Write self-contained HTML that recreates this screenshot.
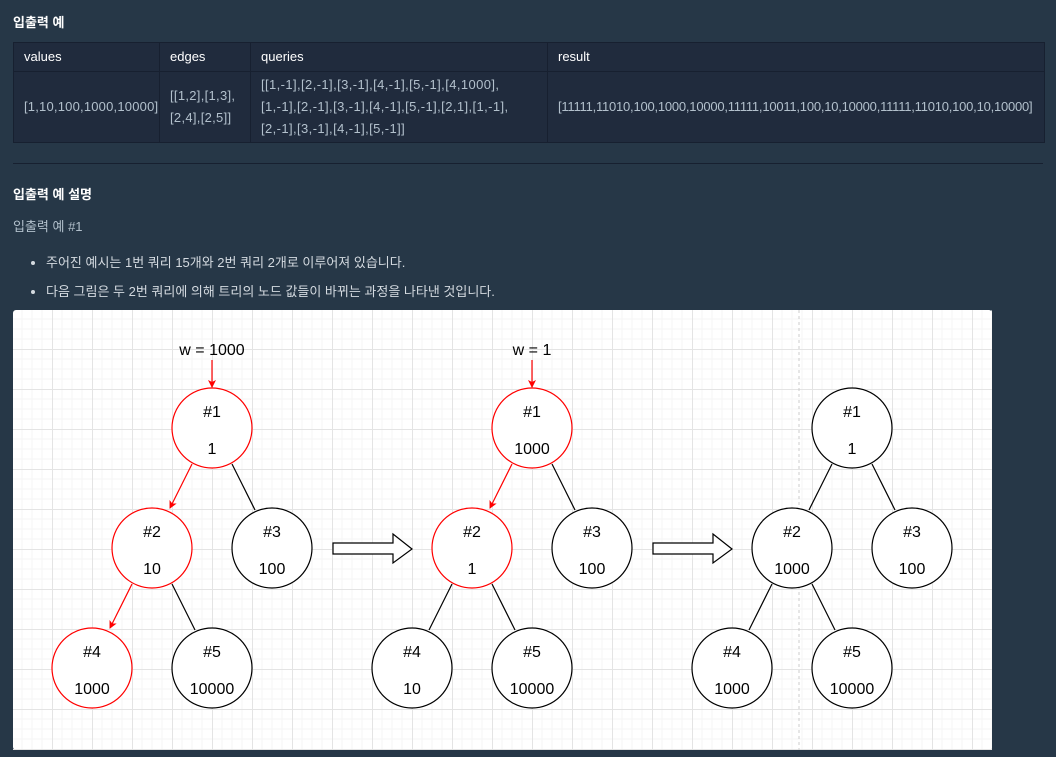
<!DOCTYPE html>
<html><head><meta charset="utf-8"><style>
body{margin:0;width:1056px;height:757px;background:#263747;font-family:"Liberation Sans","Noto Sans CJK KR",sans-serif;color:#d4dae0;overflow:hidden;position:relative}
.h{position:absolute;left:13px;font-size:13px;font-weight:bold;color:#fff}
table{position:absolute;left:13px;top:42px;border-collapse:collapse;table-layout:fixed;width:1031px;background:#202b3d;font-size:13px;color:#b2c0cc}
td,th{border:1px solid #172030;padding:0 10px;text-align:left;vertical-align:middle;line-height:22px;white-space:nowrap;overflow:visible}
th{font-weight:normal;color:#fff;height:28px}
td{height:70px}
.hr{position:absolute;left:13px;top:163px;width:1030px;height:1px;background:#172030}
.t{position:absolute;font-size:13px}
ul{position:absolute;left:13px;margin:0;padding-left:33px;font-size:13px;color:#d4dae0}
</style></head><body>
<div class="h" style="top:12px">입출력 예</div>
<table><colgroup><col style="width:146px"><col style="width:91px"><col style="width:297px"><col style="width:497px"></colgroup>
<tr><th>values</th><th>edges</th><th>queries</th><th>result</th></tr>
<tr><td style="letter-spacing:0.2px">[1,10,100,1000,10000]</td><td style="letter-spacing:0.3px">[[1,2],[1,3],<br>[2,4],[2,5]]</td><td style="letter-spacing:0.4px">[[1,-1],[2,-1],[3,-1],[4,-1],[5,-1],[4,1000],<br>[1,-1],[2,-1],[3,-1],[4,-1],[5,-1],[2,1],[1,-1],<br>[2,-1],[3,-1],[4,-1],[5,-1]]</td><td style="letter-spacing:-0.22px">[11111,11010,100,1000,10000,11111,10011,100,10,10000,11111,11010,100,10,10000]</td></tr></table>
<div class="hr"></div>
<div class="h" style="top:184px">입출력 예 설명</div>
<div class="t" style="left:13px;top:216px;color:#b2c0cc">입출력 예 #1</div>
<ul style="top:252px"><li style="margin-bottom:10px">주어진 예시는 1번 쿼리 15개와 2번 쿼리 2개로 이루어져 있습니다.</li><li>다음 그림은 두 2번 쿼리에 의해 트리의 노드 값들이 바뀌는 과정을 나타낸 것입니다.</li></ul>
<svg style="position:absolute;left:0;top:0" width="1056" height="757" font-family="Liberation Sans, Arial, sans-serif" font-size="16">
<defs>
<pattern id="g" width="40" height="40" patternUnits="userSpaceOnUse" x="12" y="29">
<path d="M10 0V40M20 0V40M30 0V40M0 10H40M0 20H40M0 30H40" stroke="#f6f6f6" stroke-width="1"/>
<path d="M0.5 0V40M0 0.5H40" stroke="#e4e4e4" stroke-width="1"/>
</pattern>
<marker id="a" markerWidth="8" markerHeight="8" refX="7" refY="4" orient="auto" markerUnits="userSpaceOnUse"><path d="M0 0L8 4L0 8L2 4Z" fill="#f00"/></marker>
</defs>
<rect x="13" y="310" width="979" height="440" rx="3" fill="#fff"/>
<rect x="13" y="310" width="979" height="440" fill="url(#g)"/>
<line x1="799" y1="310" x2="799" y2="750" stroke="#ccc" stroke-dasharray="3,3"/>
<g stroke-width="1.2" fill="none">
<line x1="232" y1="464" x2="255" y2="510" stroke="#000"/>
<line x1="172" y1="584" x2="195" y2="630" stroke="#000"/>
<line x1="192" y1="464" x2="170" y2="508" stroke="#f00" marker-end="url(#a)"/>
<line x1="132" y1="584" x2="110" y2="628" stroke="#f00" marker-end="url(#a)"/>
<line x1="212" y1="360" x2="212" y2="387" stroke="#f00" marker-end="url(#a)"/>
<line x1="552" y1="464" x2="575" y2="510" stroke="#000"/>
<line x1="452" y1="584" x2="429" y2="630" stroke="#000"/>
<line x1="492" y1="584" x2="515" y2="630" stroke="#000"/>
<line x1="512" y1="464" x2="490" y2="508" stroke="#f00" marker-end="url(#a)"/>
<line x1="532" y1="360" x2="532" y2="387" stroke="#f00" marker-end="url(#a)"/>
<line x1="832" y1="464" x2="809" y2="510" stroke="#000"/>
<line x1="872" y1="464" x2="895" y2="510" stroke="#000"/>
<line x1="772" y1="584" x2="749" y2="630" stroke="#000"/>
<line x1="812" y1="584" x2="835" y2="630" stroke="#000"/>
</g>
<g stroke-width="1.2" fill="#fff">
<circle cx="212" cy="428" r="40" stroke="#f00"/><circle cx="152" cy="548" r="40" stroke="#f00"/><circle cx="272" cy="548" r="40" stroke="#000"/><circle cx="92" cy="668" r="40" stroke="#f00"/><circle cx="212" cy="668" r="40" stroke="#000"/>
<circle cx="532" cy="428" r="40" stroke="#f00"/><circle cx="472" cy="548" r="40" stroke="#f00"/><circle cx="592" cy="548" r="40" stroke="#000"/><circle cx="412" cy="668" r="40" stroke="#000"/><circle cx="532" cy="668" r="40" stroke="#000"/>
<circle cx="852" cy="428" r="40" stroke="#000"/><circle cx="792" cy="548" r="40" stroke="#000"/><circle cx="912" cy="548" r="40" stroke="#000"/><circle cx="732" cy="668" r="40" stroke="#000"/><circle cx="852" cy="668" r="40" stroke="#000"/>
<path d="M333 543H393V534L412 549L393 563V554H333Z" stroke="#000"/>
<path d="M653 543H713V534L732 549L713 563V554H653Z" stroke="#000"/>
</g>
<g fill="#000" text-anchor="middle">
<text x="212" y="355">w = 1000</text><text x="532" y="355">w = 1</text>
<text x="212" y="417">#1</text><text x="212" y="454">1</text>
<text x="152" y="537">#2</text><text x="152" y="574">10</text>
<text x="272" y="537">#3</text><text x="272" y="574">100</text>
<text x="92" y="657">#4</text><text x="92" y="694">1000</text>
<text x="212" y="657">#5</text><text x="212" y="694">10000</text>
<text x="532" y="417">#1</text><text x="532" y="454">1000</text>
<text x="472" y="537">#2</text><text x="472" y="574">1</text>
<text x="592" y="537">#3</text><text x="592" y="574">100</text>
<text x="412" y="657">#4</text><text x="412" y="694">10</text>
<text x="532" y="657">#5</text><text x="532" y="694">10000</text>
<text x="852" y="417">#1</text><text x="852" y="454">1</text>
<text x="792" y="537">#2</text><text x="792" y="574">1000</text>
<text x="912" y="537">#3</text><text x="912" y="574">100</text>
<text x="732" y="657">#4</text><text x="732" y="694">1000</text>
<text x="852" y="657">#5</text><text x="852" y="694">10000</text>
</g>
</svg>
</body></html>
